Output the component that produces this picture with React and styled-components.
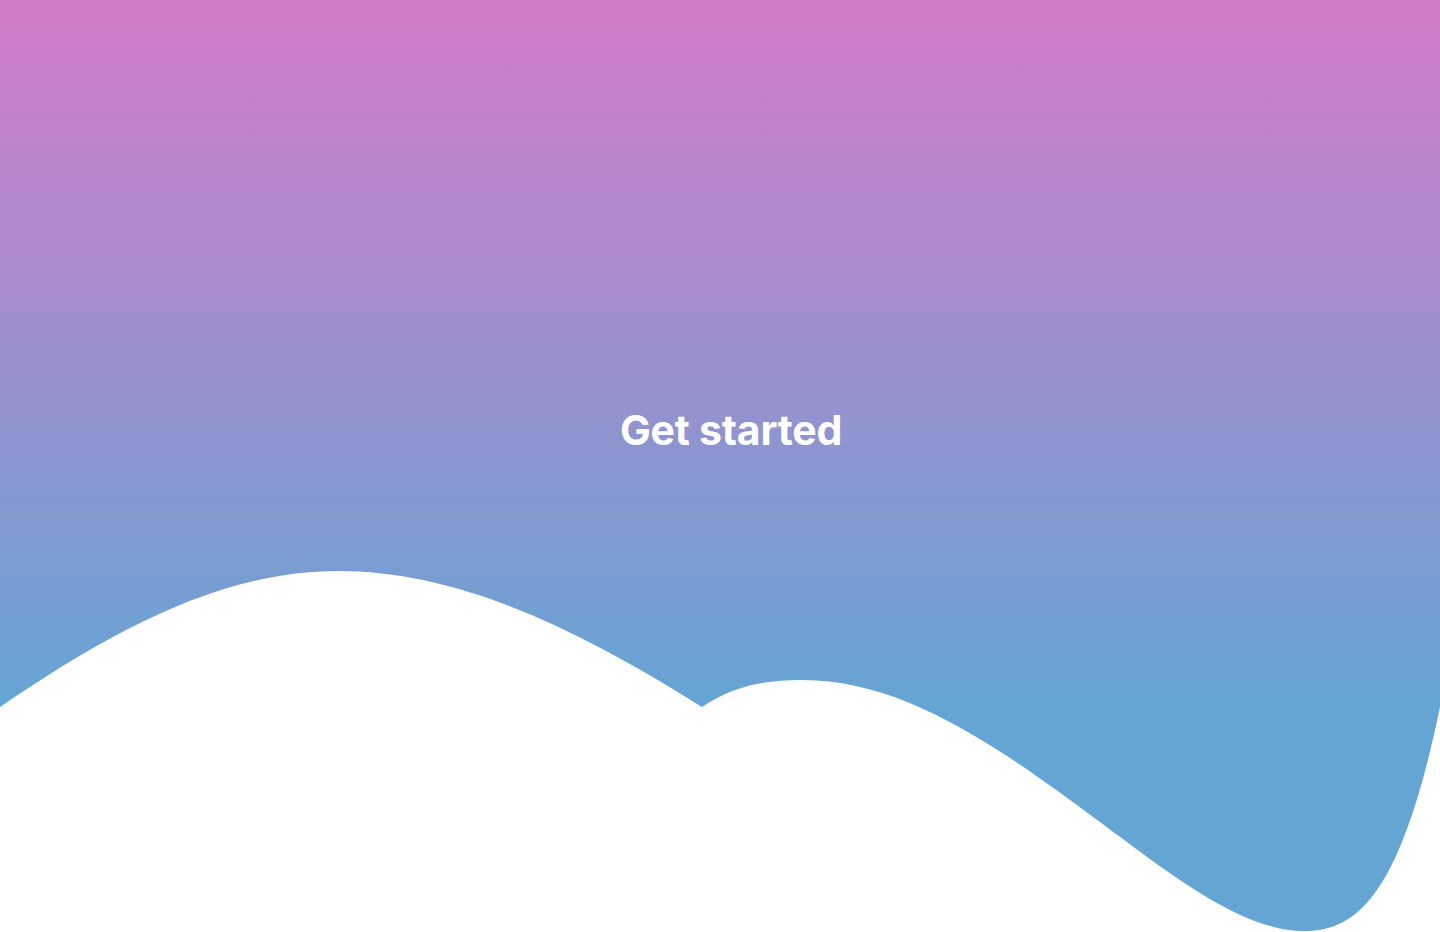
import React from 'react';
import styled, { createGlobalStyle } from 'styled-components';

const GlobalStyle = createGlobalStyle`
  html, body {
    margin: 0;
    padding: 0;
  }
  body {
    font-family: Inter, "Noto Sans", sans-serif;
    overflow: hidden;
  }
`;

const Page = styled.div`
  position: relative;
  height: 932px;
  overflow: hidden;
  background: linear-gradient(180deg, #d27ac8 0px, #65a5d4 706px, #65a5d4 100%);
`;

const Hero = styled.section`
  height: 860px;
  display: flex;
  align-items: center;
  justify-content: center;
  padding-left: 22px;
  box-sizing: border-box;
`;

const Title = styled.h1`
  margin: 0;
  font-size: 41px;
  font-weight: 700;
  color: #ffffff;
  letter-spacing: -0.2px;
`;

const Wave = styled.svg`
  position: absolute;
  left: 0;
  bottom: 0;
  width: 1440px;
  height: 932px;
  pointer-events: none;
`;

const WAVE_PATH =
  'M0,707 C110,632 220,571 338,571 C460,571 580,630 702,707 ' +
  'C730,688 760,680 802,680 C900,680 990,740 1100,822 ' +
  'C1180,882 1245,931 1304,931 C1355,931 1400,900 1440,707 ' +
  'L1440,932 L0,932 Z';

const App = () => (
  <>
    <GlobalStyle />
    <Page>
      <Hero>
        <Title>Get started</Title>
      </Hero>
      <Wave viewBox="0 0 1440 932" preserveAspectRatio="none">
        <path d={WAVE_PATH} fill="#ffffff" />
      </Wave>
    </Page>
  </>
);

export default App;
